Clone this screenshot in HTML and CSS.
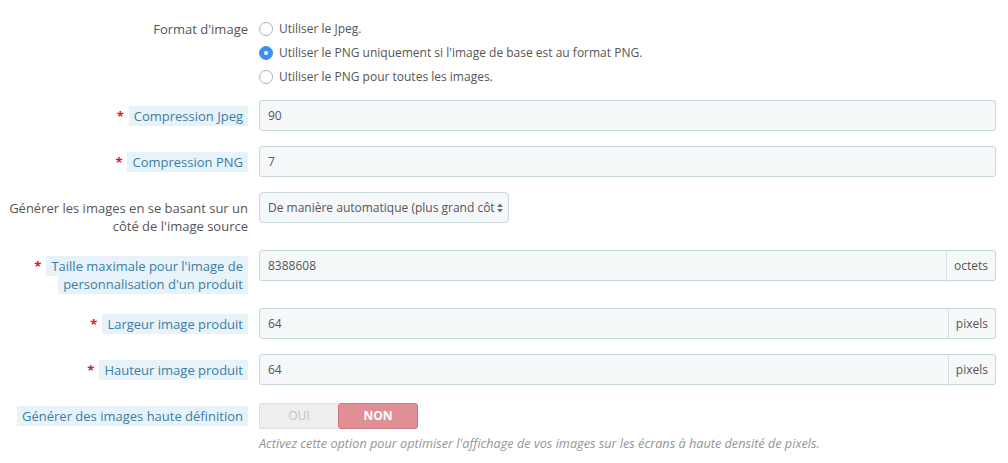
FILE: index.html
```html
<!DOCTYPE html>
<html lang="fr">
<head>
<meta charset="utf-8">
<title>Images</title>
<link rel="stylesheet" href="styles.css">
</head>
<body>
<form class="form">
  <div class="row row-radio">
    <div class="label"><span class="plain">Format d'image</span></div>
    <div class="control radios">
      <div class="radio"><span class="circle"></span><span>Utiliser le Jpeg.</span></div>
      <div class="radio"><span class="circle checked"></span><span>Utiliser le PNG uniquement si l'image de base est au format PNG.</span></div>
      <div class="radio"><span class="circle"></span><span>Utiliser le PNG pour toutes les images.</span></div>
    </div>
  </div>

  <div class="row">
    <div class="label"><span class="req">*</span><span class="tip">Compression Jpeg</span></div>
    <div class="control"><div class="input">90</div></div>
  </div>

  <div class="row">
    <div class="label"><span class="req">*</span><span class="tip">Compression PNG</span></div>
    <div class="control"><div class="input">7</div></div>
  </div>

  <div class="row">
    <div class="label"><span class="plain">Générer les images en se basant sur un côté de l'image source</span></div>
    <div class="control">
      <div class="select">
        <span class="select-text">De manière automatique (plus grand côté)</span>
        <svg class="select-arrows" width="6" height="10" viewBox="0 0 6 10"><path d="M3 0.5 L5.8 4 H0.2 Z M3 9.5 L5.8 6 H0.2 Z" fill="#666"/></svg>
      </div>
    </div>
  </div>

  <div class="row">
    <div class="label"><span class="req">*</span><span class="tip">Taille maximale pour l'image de personnalisation d'un produit</span></div>
    <div class="control"><div class="group"><div class="input grow">8388608</div><div class="addon">octets</div></div></div>
  </div>

  <div class="row">
    <div class="label"><span class="req">*</span><span class="tip">Largeur image produit</span></div>
    <div class="control"><div class="group"><div class="input grow">64</div><div class="addon">pixels</div></div></div>
  </div>

  <div class="row">
    <div class="label"><span class="req">*</span><span class="tip">Hauteur image produit</span></div>
    <div class="control"><div class="group"><div class="input grow">64</div><div class="addon">pixels</div></div></div>
  </div>

  <div class="row row-last">
    <div class="label"><span class="tip">Générer des images haute définition</span></div>
    <div class="control">
      <div class="toggle"><span class="opt-off">OUI</span><span class="opt-on">NON</span></div>
      <p class="help">Activez cette option pour optimiser l'affichage de vos images sur les écrans à haute densité de pixels.</p>
    </div>
  </div>
</form>
</body>
</html>
```
FILE: styles.css
```css
html, body {
  margin: 0;
  padding: 0;
  background: #ffffff;
}
body {
  font-family: "Open Sans", "Liberation Sans", sans-serif;
  font-size: 12px;
  color: #555555;
}
.form {
  padding-top: 17px;
}
.row {
  display: grid;
  grid-template-columns: 248px 737px;
  column-gap: 11px;
  margin-bottom: 15px;
}
.row-radio {
  margin-bottom: 11px;
}
.row-last {
  margin-bottom: 0;
}
.label {
  padding: 7px 0 0 8px;
  font-size: 13px;
  line-height: 18px;
  text-align: right;
  color: #555555;
}
.row-radio .label {
  padding-top: 3px;
}
.req {
  color: #e3141f;
  font-weight: 700;
  margin-right: 5px;
}
.tip {
  background: #e7f2f9;
  color: #3b7ea6;
  padding: 1px 5px;
  -webkit-box-decoration-break: clone;
  box-decoration-break: clone;
}
.radios {
  display: flex;
  flex-direction: column;
}
.radio {
  display: flex;
  align-items: center;
  height: 24px;
  line-height: 24px;
}
.circle {
  width: 12px;
  height: 12px;
  border: 1px solid #b0b0b0;
  border-radius: 50%;
  background: #ffffff;
  margin-right: 6px;
  flex: none;
  position: relative;
}
.circle.checked {
  background: #3a8ff0;
  border-color: #3a8ff0;
}
.circle.checked::after {
  content: "";
  position: absolute;
  left: 4px;
  top: 4px;
  width: 4px;
  height: 4px;
  border-radius: 50%;
  background: #ffffff;
}
.input {
  height: 31px;
  box-sizing: border-box;
  padding: 0 8px;
  line-height: 29px;
  background: #f5f8f9;
  border: 1px solid #c7d6db;
  border-radius: 3px;
  color: #555555;
}
.group {
  display: flex;
}
.grow {
  flex: 1;
  border-radius: 3px 0 0 3px;
}
.addon {
  height: 31px;
  box-sizing: border-box;
  padding: 0 7px;
  line-height: 29px;
  background: #f5f8f9;
  border: 1px solid #c7d6db;
  border-left: 1px solid #d6e1e5;
  border-radius: 0 3px 3px 0;
  color: #555555;
}
.grow + .addon {
  margin-left: -1px;
}
.select {
  width: 250px;
  height: 31px;
  box-sizing: border-box;
  display: flex;
  align-items: center;
  padding: 0 5px 0 8px;
  background: #f5f8f9;
  border: 1px solid #c7d6db;
  border-radius: 4px;
  color: #555555;
}
.select-text {
  flex: 1;
  overflow: hidden;
  white-space: nowrap;
  line-height: 29px;
}
.select-arrows {
  flex: none;
  margin-left: 2px;
}
.toggle {
  display: flex;
  width: 159px;
  height: 26px;
  margin-top: 3px;
  font-weight: 700;
}
.opt-off {
  flex: 1;
  box-sizing: border-box;
  background: #eeeeee;
  border: 1px solid #dcdcdc;
  border-right: none;
  border-radius: 3px 0 0 3px;
  color: #c3c3c3;
  font-weight: 400;
  text-align: center;
  line-height: 24px;
}
.opt-on {
  flex: 1;
  box-sizing: border-box;
  background: #e08f95;
  border: 1px solid #cf7780;
  border-radius: 3px;
  color: #ffffff;
  text-align: center;
  line-height: 24px;
}
.help {
  margin: 5px 0 0 0;
  font-size: 12.7px;
  font-style: italic;
  color: #959595;
  line-height: 18px;
}
```
